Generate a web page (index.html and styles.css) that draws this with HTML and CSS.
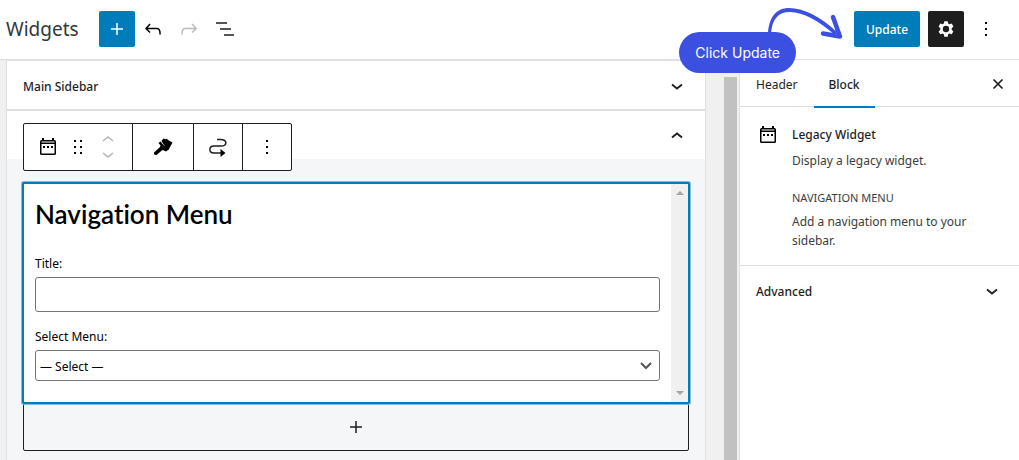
FILE: index.html
```html
<!DOCTYPE html>
<html lang="en">
<head>
<meta charset="UTF-8">
<meta name="viewport" content="width=device-width, initial-scale=1.0">
<title>Widgets</title>
<link rel="stylesheet" href="styles.css">
</head>
<body>
  <header class="header">
    <h1>Widgets</h1>
    <button class="btn btn-blue btn-icon" aria-label="Add block">
      <svg width="24" height="24" viewBox="0 0 24 24"><path d="M12 6v12M6 12h12" fill="none" stroke="#fff" stroke-width="1.5"/></svg>
    </button>
    <button class="tool" aria-label="Undo">
      <svg width="24" height="24" viewBox="0 0 24 24"><path d="M18.3 11.7c-.6-.6-1.4-.9-2.3-.9H6.7l2.9-3.3-1.1-1-4.5 5L8.5 16l1-1-2.7-2.7H16c.5 0 .9.2 1.3.5 1 1 1 3.4 1 4.5v.3h1.5v-.2c0-1.5 0-4.3-1.5-5.7z"/></svg>
    </button>
    <button class="tool" aria-label="Redo" disabled>
      <svg width="24" height="24" viewBox="0 0 24 24"><path d="M15.6 6.5l-1.1 1 2.9 3.3H8c-.9 0-1.7.3-2.3.9-1.4 1.5-1.4 4.2-1.4 5.6v.2h1.5v-.3c0-1.1 0-3.5 1-4.5.3-.3.7-.5 1.3-.5h9.2L14.5 15l1.1 1.1 4.6-4.6-4.6-5z"/></svg>
    </button>
    <button class="tool" aria-label="List view">
      <svg width="24" height="24" viewBox="0 0 24 24"><path d="M3 6h11M7 12h11M11 18h10" fill="none" stroke="#1e1e1e" stroke-width="1.5"/></svg>
    </button>
    <div class="header-right">
      <button class="btn btn-blue">Update</button>
      <button class="btn btn-dark btn-icon" aria-label="Settings">
        <svg width="24" height="24" viewBox="0 0 24 24"><path fill="#fff" fill-rule="evenodd" d="M10.3 4.3h3.4l.5 2.3 1.2.7 2.3-.7 1.7 2.9-1.7 1.7v1.5l1.7 1.7-1.7 2.9-2.3-.7-1.2.7-.5 2.4h-3.4l-.5-2.4-1.2-.7-2.3.7-1.7-2.9 1.7-1.7v-1.5L4.6 9.5l1.7-2.9 2.3.7 1.2-.7zM12 8.8a3.2 3.2 0 1 0 0 6.4 3.2 3.2 0 0 0 0-6.4z"/></svg>
      </button>
      <button class="tool tool-more" aria-label="Options">
        <svg width="24" height="24" viewBox="0 0 24 24"><path d="M11 5h2v2h-2zM11 11h2v2h-2zM11 17h2v2h-2z"/></svg>
      </button>
    </div>
    <div class="callout">
      <svg class="callout-arrow" width="80" height="34" viewBox="0 0 80 34"><path d="M0 28C1 10 9 2 21 2c14 0 31 8 48 24l-2 3C51 15 35 6 22 6 10 6 4 13 3 28z" fill="#3b4fe0"/><path d="M65 11l7 19.500-17-3" fill="none" stroke="#3b4fe0" stroke-width="4.500" stroke-linecap="round" stroke-linejoin="round"/></svg>
      Click Update
    </div>
  </header>

  <div class="layout">
    <main class="canvas">
      <div class="areas">
        <section class="area">
          <h2 class="area-head">
            <button>Main Sidebar
              <svg width="24" height="24" viewBox="0 0 24 24"><path d="M7 10.5l5 4 5-4" fill="none" stroke="#1e1e1e" stroke-width="1.8"/></svg>
            </button>
          </h2>
        </section>
        <section class="area open">
          <h2 class="area-head">
            <button aria-label="Header area">
              <svg width="24" height="24" viewBox="0 0 24 24"><path d="M7 13.5l5-4 5 4" fill="none" stroke="#1e1e1e" stroke-width="1.8"/></svg>
            </button>
          </h2>
          <div class="toolbar">
            <div class="group">
              <button aria-label="Legacy Widget">
                <svg width="24" height="24" viewBox="0 0 24 24"><use href="#calendar"/></svg>
              </button>
              <button aria-label="Drag">
                <svg width="24" height="24" viewBox="0 0 24 24"><path d="M8 5h2v2H8zM14 5h2v2h-2zM8 11h2v2H8zM14 11h2v2h-2zM8 17h2v2H8zM14 17h2v2h-2z"/></svg>
              </button>
              <button aria-label="Move">
                <svg width="24" height="24" viewBox="0 0 24 24"><path d="M7 6l5-4 5 4M7 18l5 4 5-4" fill="none" stroke="#b5b5b5" stroke-width="1.6"/></svg>
              </button>
            </div>
            <div class="group group-brush">
              <button aria-label="Style">
                <svg width="24" height="24" viewBox="0 0 24 24"><path d="M12.5 3.5l2 .8 1.500-.5 1 1.200 4.500 2.500-4 7.500-1.500-.5L10.500 6zM9.500 6.500l7.500 8.500-2 1.500-3-1.500-1.200.5L5.500 20l-2.500-.5v-2l6-5.500.5-1.500L7.500 8z"/></svg>
              </button>
            </div>
            <div class="group">
              <button aria-label="Move to widget area">
                <svg width="24" height="24" viewBox="0 0 24 24"><path d="M11 4.5h3.500c7 0 7 6.500 1 6.500H8c-5.500 0-5.500 7 0 7h8" fill="none" stroke="#1e1e1e" stroke-width="1.5"/><path d="M14.5 14l5 4-5 4z"/></svg>
              </button>
            </div>
            <div class="group">
              <button aria-label="More options">
                <svg width="24" height="24" viewBox="0 0 24 24"><path d="M11 5h2v2h-2zM11 11h2v2h-2zM11 17h2v2h-2z"/></svg>
              </button>
            </div>
          </div>
          <div class="area-body">
            <div class="widget">
              <form class="widget-form">
                <h3>Navigation Menu</h3>
                <label for="title">Title:</label>
                <input type="text" id="title">
                <label for="menu">Select Menu:</label>
                <select id="menu">
                  <option>— Select —</option>
                </select>
              </form>
              <div class="widget-scroll">
                <svg width="8" height="4" viewBox="0 0 8 4"><path d="M0 4l4-4 4 4z" fill="#a3a3a3"/></svg>
                <svg width="8" height="4" viewBox="0 0 8 4"><path d="M0 0l4 4 4-4z" fill="#a3a3a3"/></svg>
              </div>
            </div>
            <button class="appender" aria-label="Add block">
              <svg width="24" height="24" viewBox="0 0 24 24"><path d="M12 6v12M6 12h12" fill="none" stroke="#1e1e1e" stroke-width="1.5"/></svg>
            </button>
          </div>
        </section>
      </div>
      <div class="scrollbar"></div>
    </main>

    <aside class="sidebar">
      <nav class="tabs">
        <button>Header</button>
        <button class="active">Block</button>
        <button class="close" aria-label="Close settings">
          <svg width="24" height="24" viewBox="0 0 24 24"><path d="M7.5 7.5l9 9M16.5 7.5l-9 9" fill="none" stroke="#1e1e1e" stroke-width="1.7"/></svg>
        </button>
      </nav>
      <div class="card">
        <svg width="24" height="24" viewBox="0 0 24 24">
          <path id="calendar" fill-rule="evenodd" d="M6 3h2v2h8V3h2v2h.5A1.5 1.5 0 0 1 20 6.500v12a1.5 1.5 0 0 1-1.5 1.5h-13A1.5 1.5 0 0 1 4 18.500v-12A1.5 1.5 0 0 1 5.500 5H6zM5.500 6.500v1h13v-1zM5.500 9v9.500h13V9zM7 11h2v2H7zM11 11h2v2h-2zM15 11h2v2h-2z"/>
        </svg>
        <div>
          <h2>Legacy Widget</h2>
          <p>Display a legacy widget.</p>
          <h3>Navigation Menu</h3>
          <p>Add a navigation menu to your sidebar.</p>
        </div>
      </div>
      <button class="advanced">Advanced
        <svg width="24" height="24" viewBox="0 0 24 24"><path d="M7 10.5l5 4 5-4" fill="none" stroke="#1e1e1e" stroke-width="1.8"/></svg>
      </button>
    </aside>
  </div>
</body>
</html>
```

FILE: styles.css
```css
* {
  box-sizing: border-box;
}
body {
  margin: 0;
  height: 100vh;
  overflow: hidden;
  display: flex;
  flex-direction: column;
  font-family: "Noto Sans", "Open Sans", sans-serif;
  font-size: 12px;
  color: #1e1e1e;
}
h1, h2, h3, p {
  margin: 0;
}
button {
  font: inherit;
  color: inherit;
  background: none;
  border: none;
  padding: 0;
  cursor: pointer;
}
svg {
  display: block;
  flex-shrink: 0;
}

/* top bar */
.header {
  position: relative;
  display: flex;
  align-items: center;
  height: 60px;
  flex-shrink: 0;
  padding: 0 15px 2px 6px;
  border-bottom: 1px solid #e0e0e0;
}
.header h1 {
  width: 93px;
  font-size: 19px;
  font-weight: 400;
  color: #32373c;
}
.btn {
  height: 36px;
  padding: 2px 12px 0;
  border-radius: 2px;
  color: #fff;
  font-weight: 500;
}
.btn-icon {
  width: 36px;
  padding: 6px;
}
.btn-blue {
  background: #007cba;
}
.btn-dark {
  background: #1e1e1e;
}
.tool {
  width: 36px;
  padding: 6px;
}
.tool:disabled {
  fill: #bbb;
}
.header-right {
  display: flex;
  gap: 8px;
  margin-left: auto;
}
.header-right .tool-more {
  width: 32px;
  padding: 6px 6px 6px 2px;
}
.header-right .btn-blue {
  width: 66px;
}

.callout {
  position: absolute;
  right: 223px;
  top: 32px;
  z-index: 2;
  padding: 0 16px;
  border-radius: 21px;
  background: #3b4fe0;
  color: #fff;
  font-family: Inter, sans-serif;
  font-size: 14px;
  line-height: 41px;
}
.callout-arrow {
  position: absolute;
  left: 89px;
  top: -26px;
}

.layout {
  display: flex;
  flex: 1;
  min-height: 0;
}

/* widget areas */
.canvas {
  display: flex;
  flex: 1;
  background: #f0f0f0;
  overflow: hidden;
}
.areas {
  flex: 1;
  margin-left: 6px;
  border: 1px solid #e0e0e0;
  border-bottom: none;
  background: #f5f6f8;
}
.area {
  position: relative;
}
.area-head {
  background: #fff;
  font-size: 12px;
  font-weight: 500;
}
.area-head button {
  display: flex;
  align-items: center;
  width: 100%;
  height: 48px;
  padding: 2px 16px 0;
}
.area-head svg {
  margin-left: auto;
}
.open {
  border-top: 2px solid #e0e0e0;
}
.area-body {
  padding: 23px 15px 9px;
}

.toolbar {
  position: absolute;
  left: 16px;
  top: 12px;
  display: flex;
  border: 1px solid #1e1e1e;
  border-radius: 2px;
  background: #fff;
}
.group {
  display: flex;
  align-items: center;
  height: 46px;
  padding: 0 12px;
  gap: 6px;
}
.group + .group {
  border-left: 1px solid #1e1e1e;
}
.group-brush {
  padding: 0 18px;
}

.widget {
  position: relative;
  display: flex;
  border: 2px solid #007cba;
  border-radius: 2px;
  box-shadow: 0 0 0 1px #80bddc;
  background: #fff;
}
.widget-form {
  flex: 1;
  padding: 14px 11px 21px;
  color: #000;
}
.widget-form h3 {
  margin-bottom: 24px;
  font-family: Lato, sans-serif;
  font-size: 26px;
  font-weight: 600;
  font-variant-ligatures: none;
  line-height: 32px;
}
.widget-form label {
  display: block;
  line-height: 20px;
  margin-bottom: 3px;
}
.widget-form input,
.widget-form select {
  display: block;
  width: 100%;
  border: 1px solid #757575;
  border-radius: 3px;
  font: inherit;
  color: #000;
}
.widget-form input {
  height: 35px;
  margin-bottom: 15px;
  padding: 0 8px;
}
.widget-form select {
  height: 31px;
  padding: 1px 4px 0;
  appearance: none;
  background: #fff url("data:image/svg+xml,%3Csvg xmlns='http://www.w3.org/2000/svg' width='12' height='8'%3E%3Cpath d='M1 1l5 5 5-5' fill='none' stroke='%23555' stroke-width='2'/%3E%3C/svg%3E") no-repeat right 7px center;
}
.widget-scroll {
  display: flex;
  flex-direction: column;
  align-items: center;
  justify-content: space-between;
  width: 17px;
  padding: 7px 0;
  background: #f0f0f0;
}
.appender {
  display: flex;
  align-items: center;
  justify-content: center;
  width: calc(100% - 2px);
  height: 48px;
  margin: -1px 1px 0;
  border: 1px solid #1e1e1e;
  border-radius: 2px;
}

.scrollbar {
  width: 13px;
  margin: 17px 2px 0 18px;
  background: #c1c1c1;
}

/* settings sidebar */
.sidebar {
  width: 280px;
  border-left: 1px solid #e0e0e0;
  background: #fff;
}
.tabs {
  display: flex;
  height: 47px;
  border-bottom: 1px solid #ddd;
}
.tabs button {
  height: 48px;
  padding: 0 16px;
}
.tabs .active {
  border-bottom: 2px solid #007cba;
  padding: 2px 15px 0;
  font-weight: 500;
}
.tabs .close {
  margin-left: auto;
  padding: 0 9px;
}
.card {
  display: flex;
  gap: 12px;
  padding: 16px 16px 15px;
  border-bottom: 1px solid #e0e0e0;
  color: #3c3c3c;
}
.card h2 {
  margin-bottom: 4px;
  font-size: 12px;
  font-weight: 500;
  line-height: 24px;
  color: #1e1e1e;
}
.card p {
  line-height: 19px;
}
.card h3 {
  margin: 18px 0 4px;
  font-size: 11px;
  font-weight: 400;
  line-height: 20px;
  text-transform: uppercase;
}
.advanced {
  display: flex;
  align-items: center;
  justify-content: space-between;
  width: 100%;
  height: 50px;
  padding: 0 15px 0 16px;
  font-weight: 500;
}
```
